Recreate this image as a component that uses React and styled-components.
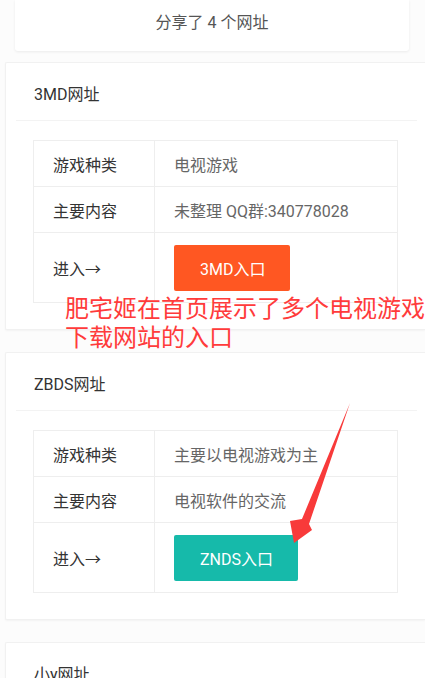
import React from "react";
import styled, { createGlobalStyle } from "styled-components";

const GlobalStyle = createGlobalStyle`
  html, body {
    margin: 0;
    padding: 0;
    background: #fcfcfc;
  }
  body {
    font-family: Roboto, "Noto Sans CJK SC", sans-serif;
    -webkit-font-smoothing: antialiased;
  }
`;

const Page = styled.div`
  position: relative;
  width: 425px;
  height: 678px;
  overflow: hidden;
`;

const SummaryCard = styled.div`
  margin: 0 16px 0 15px;
  height: 51px;
  background: #fff;
  border-radius: 0 0 3px 3px;
  box-shadow: 0 1px 3px rgba(0, 0, 0, 0.07);
  display: flex;
  align-items: center;
  justify-content: center;
  padding-bottom: 9px;
  box-sizing: border-box;
  font-size: 16px;
  color: #555;
`;

const CardList = styled.div`
  display: flex;
  flex-direction: column;
  gap: 22px;
  margin: 11px 0 0 5px;
`;

const Card = styled.section`
  background: #fff;
  border: 1px solid #f1f1f1;
  border-right: none;
  border-radius: 2px 0 0 2px;
  box-shadow: 0 1px 2px rgba(0, 0, 0, 0.04);
`;

const CardHeader = styled.div`
  height: 58px;
  margin: 0 8px 0 10px;
  padding: 2px 0 0 18px;
  box-sizing: border-box;
  display: flex;
  align-items: center;
  border-bottom: 1px solid #f3f3f3;
  font-size: 16px;
  color: #333;
`;

const CardBody = styled.div`
  padding: 19px 27px 26px 27px;
`;

const Table = styled.div`
  border: 1px solid #eeeeee;
  display: grid;
  grid-template-columns: 121px 1fr;
`;

const Cell = styled.div`
  height: ${(p) => p.$h}px;
  box-sizing: border-box;
  display: flex;
  align-items: center;
  font-size: 16px;
  border-bottom: ${(p) => (p.$last ? "none" : "1px solid #eeeeee")};
`;

const Label = styled(Cell)`
  padding-left: 19px;
  color: #333;
  border-right: 1px solid #eeeeee;
`;

const Value = styled(Cell)`
  padding-left: 19px;
  color: #666;
  white-space: nowrap;
`;

const EnterButton = styled.a`
  display: inline-flex;
  align-items: center;
  height: 46px;
  padding: 0 25px 0 26px;
  border-radius: 2px;
  background: ${(p) => p.$color};
  color: #fff;
  font-size: 16px;
  text-decoration: none;
`;

const Annotation = styled.div`
  position: absolute;
  left: 65px;
  top: 292px;
  font-family: "Noto Sans CJK SC", sans-serif;
  font-size: 24px;
  line-height: 29px;
  color: #ff3b3b;
  pointer-events: none;
`;

const ArrowLayer = styled.svg`
  position: absolute;
  left: 0;
  top: 0;
  pointer-events: none;
`;

const sites = [
  {
    title: "3MD网址",
    kind: "电视游戏",
    content: "未整理 QQ群:340778028",
    button: "3MD入口",
    color: "#ff5722",
  },
  {
    title: "ZBDS网址",
    kind: "主要以电视游戏为主",
    content: "电视软件的交流",
    button: "ZNDS入口",
    color: "#16baaa",
  },
  {
    title: "小y网址",
    kind: "电视游戏",
    content: "电视游戏资源",
    button: "小y入口",
    color: "#1e9fff",
  },
];

const SiteCard = ({ site }) => (
  <Card>
    <CardHeader>{site.title}</CardHeader>
    <CardBody>
      <Table>
        <Label $h={46}>游戏种类</Label>
        <Value $h={46}>{site.kind}</Value>
        <Label $h={46}>主要内容</Label>
        <Value $h={46}>{site.content}</Value>
        <Label $h={69} $last>
          进入→
        </Label>
        <Value $h={69} $last>
          <EnterButton href="#" $color={site.color}>
            {site.button}
          </EnterButton>
        </Value>
      </Table>
    </CardBody>
  </Card>
);

const App = () => {
  return (
    <Page>
      <GlobalStyle />
      <SummaryCard>分享了 4 个网址</SummaryCard>
      <CardList>
        {sites.map((s) => (
          <SiteCard key={s.title} site={s} />
        ))}
      </CardList>
      <Annotation>
        肥宅姬在首页展示了多个电视游戏
        <br />
        下载网站的入口
      </Annotation>
      <ArrowLayer width="425" height="678" viewBox="0 0 425 678">
        <polygon
          points="350,403 309,524 312,530 294,543 290,521 302,519"
          fill="#f83a3a"
        />
      </ArrowLayer>
    </Page>
  );
};

export default App;
